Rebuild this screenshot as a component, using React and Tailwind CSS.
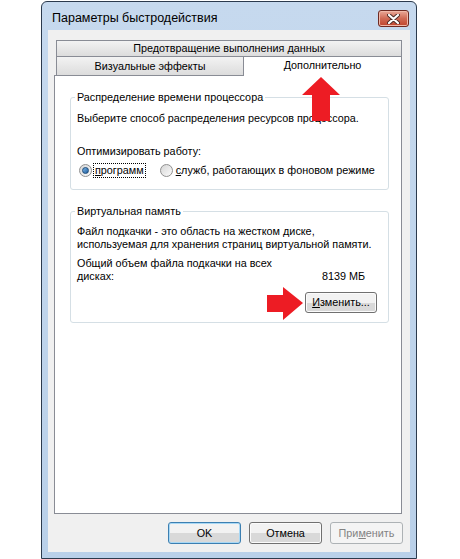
import React from 'react';

const font = "font-['Segoe_UI','Liberation_Sans',sans-serif]";

function Radio({ checked }) {
  return (
    <span className="flex h-[13px] w-[13px] shrink-0 items-center justify-center rounded-full border border-[#8f8f8f] bg-linear-to-br from-[#d6d6d6] to-[#fbfbfb]">
      {checked && (
        <span className="h-[7px] w-[7px] rounded-full border border-[#1b4a78] bg-linear-to-br from-[#7ab4e6] to-[#1f5f9e]" />
      )}
    </span>
  );
}

function Button({ children, variant }) {
  if (variant === 'disabled') {
    return (
      <div className="flex h-[22px] w-[73px] items-center justify-center rounded-[3px] border border-[#adb2b5] bg-[#f4f4f4] text-[#838383]">
        {children}
      </div>
    );
  }
  const border = variant === 'default' ? 'border-[#3c7fb1] shadow-[inset_0_0_0_1px_#a8d8f5]' : 'border-[#707070] shadow-[inset_0_0_0_1px_#fbfbfb]';
  return (
    <div className={`flex h-[22px] w-[73px] items-center justify-center rounded-[3px] border bg-linear-to-b from-[#f2f2f2] from-50% to-[#d9d9d9] to-50% text-black ${border}`}>
      {children}
    </div>
  );
}

export default function App() {
  return (
    <div className={`relative h-[559px] w-[460px] overflow-hidden bg-white pt-[1px] pl-[41px] text-[10.8px] leading-[13px] text-black ${font}`}>
      {/* window */}
      <div className="flex h-[558px] w-[376px] flex-col rounded-t-[6px] border border-[#2b3a4d] bg-linear-to-b from-[#c6d9ee] to-[#b9d0e9]">
        {/* title bar */}
        <div className="flex h-[28px] items-start justify-between pt-[8px] pr-[7px] pl-[10px]">
          <div className="text-[12.5px] leading-[16px] text-black">Параметры быстродействия</div>
          <div className="flex h-[17px] w-[31px] items-center justify-center rounded-[3px] border border-[#6e2a22] bg-linear-to-b from-[#e9a898] via-[#d06a55] to-[#c0432c] shadow-[inset_0_0_0_1px_#f0b8a8]">
            <svg width="13" height="10" viewBox="0 0 13 10">
              <path d="M2 1 L11 9 M11 1 L2 9" stroke="#4a2a25" strokeWidth="4" strokeLinecap="round" />
              <path d="M2 1 L11 9 M11 1 L2 9" stroke="#ffffff" strokeWidth="2.2" strokeLinecap="round" />
            </svg>
          </div>
        </div>

        {/* client area */}
        <div className="mx-[6px] flex h-[522px] flex-col bg-[#f0f0f0] pt-[10px]">
          {/* tabs */}
          <div className="ml-[8px] flex h-[17px] w-[346px] items-center justify-center border border-[#898c95] bg-linear-to-b from-[#f3f3f3] to-[#dcdcdc]">
            Предотвращение выполнения данных
          </div>
          <div className="-mt-px ml-[8px] flex h-[20px] w-[346px]">
            <div className="flex h-[20px] w-[188px] items-center justify-center border border-[#898c95] bg-linear-to-b from-[#f3f3f3] to-[#dcdcdc] pt-[1px]">
              Визуальные эффекты
            </div>
            <div className="relative z-10 -ml-px flex h-[20px] w-[159px] items-start justify-center border-x border-t border-[#898c95] bg-white pt-[2px]">
              Дополнительно
            </div>
          </div>

          {/* panel */}
          <div className="-mt-px ml-[6px] h-[439px] w-[348px] border border-[#898c95] bg-white pt-[15px] pl-[15px]">
            <fieldset className="w-[319px] rounded-[3px] border border-[#d5dfe5] px-[6px] pb-[11px]">
              <legend className="-ml-[2px] px-[2px]">Распределение времени процессора</legend>
              <div className="mt-[8px]">Выберите способ распределения ресурсов процессора.</div>
              <div className="mt-[20px]">Оптимизировать работу:</div>
              <div className="mt-[4px] flex h-[16px] items-center">
                <div className="ml-[2px] flex items-center">
                  <Radio checked />
                  <span className="ml-[1px] border border-dotted border-black px-[1px] leading-[13px]">
                    <span className="underline">п</span>рограмм
                  </span>
                </div>
                <div className="ml-[14px] flex items-center">
                  <Radio />
                  <span className="ml-[3px]">
                    <span className="underline">с</span>лужб, работающих в фоновом режиме
                  </span>
                </div>
              </div>
            </fieldset>

            <fieldset className="mt-[15px] w-[319px] rounded-[3px] border border-[#d5dfe5] px-[6px] pb-[9px]">
              <legend className="-ml-[2px] px-[2px]">Виртуальная память</legend>
              <div className="mt-[7px]">
                <div>Файл подкачки - это область на жестком диске,</div>
                <div>используемая для хранения страниц виртуальной памяти.</div>
              </div>
              <div className="mt-[6px] flex items-end justify-between pr-[17px]">
                <div>
                  <div>Общий объем файла подкачки на всех</div>
                  <div>дисках:</div>
                </div>
                <div>8139 МБ</div>
              </div>
              <div className="mt-[9px] flex justify-end pr-[5px]">
                <div className="flex h-[21px] w-[72px] items-center justify-center rounded-[3px] border border-[#707070] bg-linear-to-b from-[#f2f2f2] from-50% to-[#d9d9d9] to-50% shadow-[inset_0_0_0_1px_#fbfbfb]">
                  <span><span className="underline">И</span>зменить...</span>
                </div>
              </div>
            </fieldset>
          </div>

          {/* buttons */}
          <div className="mt-[8px] flex justify-end gap-[8px] pr-[7px]">
            <Button variant="default">OK</Button>
            <Button>Отмена</Button>
            <Button variant="disabled">
              <span>При<span className="underline">м</span>енить</span>
            </Button>
          </div>
        </div>
      </div>

      {/* red arrows */}
      <svg className="pointer-events-none absolute inset-0" width="460" height="559" viewBox="0 0 460 559">
        <polygon points="321,77 340,95 330,95 330,121 312,121 312,95 302,95" fill="#ed1c24" />
        <polygon points="303,303 283,287 283,295 267,295 267,312 283,312 283,320" fill="#ed1c24" />
      </svg>
    </div>
  );
}
